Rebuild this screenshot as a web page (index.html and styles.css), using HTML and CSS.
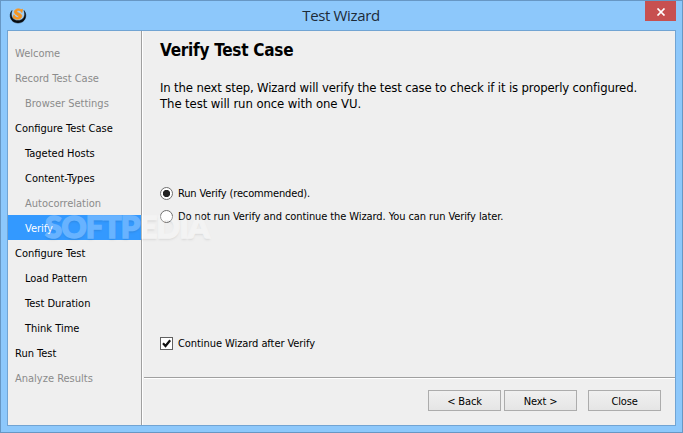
FILE: index.html
```html
<!DOCTYPE html>
<html lang="en">
<head>
<meta charset="utf-8">
<title>Test Wizard</title>
<link rel="stylesheet" href="styles.css">
</head>
<body>
<div class="window">
  <header class="titlebar">
    <svg class="app-icon" width="18" height="18" viewBox="0 0 18 18">
      <circle cx="9" cy="8" r="6.600" fill="#a3cdf0"/>
      <path d="M3 3.500C-.8 8 1.500 16 9 16S18.800 8 15 3.500C17 8.500 14.500 13.500 9 13.500S1 8.500 3 3.500Z" fill="#080c10" stroke="#080c10" stroke-width=".5"/>
      <path d="M13.500 2.300l-.7 3.200C12 3 7.800 2.700 7.800 4.400c0 1.800 5.300 1.800 4.900 4.900-.4 3.300-5.500 3.700-8.400 1.400l.6-2.900c1 3 4.700 3.400 4.900 1.900C10 8 5.100 7.900 5.400 4.800 5.600 1.900 10 1.100 12.200 2.800Z" fill="#f7941e" stroke="#f7941e" stroke-width=".9"/>
    </svg>
    <h1 class="caption">Test Wizard</h1>
    <button class="close" aria-label="Close"><svg width="10" height="8" viewBox="0 0 10 8"><path d="M1.500 .5l7 7M8.500 .5l-7 7" stroke="#fff" stroke-width="1.700"/></svg></button>
  </header>
  <div class="client">
    <nav class="steps">
      <div class="step off"><span>Welcome</span></div>
      <div class="step off"><span>Record Test Case</span></div>
      <div class="step sub off"><span>Browser Settings</span></div>
      <div class="step"><span>Configure Test Case</span></div>
      <div class="step sub"><span>Tageted Hosts</span></div>
      <div class="step sub"><span>Content-Types</span></div>
      <div class="step sub off"><span>Autocorrelation</span></div>
      <div class="step sub current"><span>Verify</span></div>
      <div class="step"><span>Configure Test</span></div>
      <div class="step sub"><span>Load Pattern</span></div>
      <div class="step sub"><span>Test Duration</span></div>
      <div class="step sub"><span>Think Time</span></div>
      <div class="step"><span>Run Test</span></div>
      <div class="step off"><span>Analyze Results</span></div>
    </nav>
    <main class="page">
      <section class="content">
        <h2 class="heading">Verify Test Case</h2>
        <p class="intro"><span class="line1">In the next step, Wizard will verify the test case to check if it is properly configured.</span><br><span class="line2">The test will run once with one VU.</span></p>
        <div class="options">
          <label class="option"><i class="radio on"></i><span class="opt1">Run Verify (recommended).</span></label>
          <label class="option"><i class="radio"></i><span class="opt2">Do not run Verify and continue the Wizard. You can run Verify later.</span></label>
        </div>
        <label class="option after"><i class="check"><svg width="11" height="11" viewBox="0 0 11 11"><path d="M2 5.300L4.500 8 9.200 2.200" fill="none" stroke="#111" stroke-width="2.200"/></svg></i><span class="opt3">Continue Wizard after Verify</span></label>
      </section>
      <footer class="actions">
        <button class="btn">&lt; Back</button>
        <button class="btn">Next &gt;</button>
        <button class="btn apart">Close</button>
      </footer>
    </main>
  </div>
  <div class="watermark">SOFTPEDIA</div>
</div>
</body>
</html>
```
FILE: styles.css
```css
* { box-sizing: border-box; }
body { margin: 0; }
.window {
  position: relative;
  width: 683px;
  height: 433px;
  border: 1px solid #6797c4;
  padding: 0 6px;
  background: #8dc8fb;
  font: 11px/14px "DejaVu Sans Condensed", "DejaVu Sans", sans-serif;
  font-stretch: condensed;
  color: #000;
  overflow: hidden;
}
.titlebar { display: flex; height: 29px; justify-content: space-between; }
.app-icon { margin: 6px 0 0 2px; }
.caption {
  margin: 4px 0 0 10px;
  font: 15px/20px "Open Sans", sans-serif;
  letter-spacing: -.35px;
  color: #1d2b38;
}
.close {
  display: flex;
  align-items: center;
  justify-content: center;
  width: 31px;
  height: 20px;
  padding: 1px 0 0 1px;
  border: 0;
  background: #c75050;
}
.client {
  display: flex;
  width: 669px;
  height: 396px;
  border: 1px solid #71a4d3;
  background: #efefef;
}
.steps {
  width: 134px;
  padding-top: 9px;
  border-right: 1px solid #a0a0a0;
}
.step { height: 25px; padding: 7px 0 0 7px; white-space: nowrap; }
.sub { padding-left: 17px; }
.off { color: #8b8b8b; }
.current { background: #3399ff; color: #fff; }
.page {
  display: flex;
  flex-direction: column;
  flex: 1;
  border-left: 1px solid #fff;
  padding-left: 1px;
}
.content { height: 346px; padding-left: 16px; }
.heading { margin: 0; padding-top: 8px; font-size: 17px; line-height: 22px; letter-spacing: -.25px; }
.intro { margin: 19px 0 0; font-size: 13px; line-height: 16px; white-space: nowrap; }
.line1 { letter-spacing: -.15px; }
.line2 { letter-spacing: -.09px; }
.options { display: flex; flex-direction: column; gap: 9px; margin-top: 74px; }
.option { display: flex; align-items: center; gap: 5px; height: 14px; white-space: nowrap; }
.option span { padding-top: 2px; }
.opt1 { letter-spacing: -.15px; }
.opt2 { letter-spacing: -.085px; }
.opt3 { letter-spacing: -.07px; }
.radio {
  width: 13px;
  height: 13px;
  border: 1px solid #707070;
  border-radius: 50%;
  background: #fff;
}
.on { background: radial-gradient(circle, #222 3.300px, #fff 4px); }
.after { margin-top: 113px; }
.check { display: flex; width: 13px; height: 13px; border: 1px solid #606060; background: #fff; }
.actions {
  display: flex;
  gap: 3px;
  height: 48px;
  padding: 12px 0 0 284px;
  border-top: 1px solid #a0a0a0;
  box-shadow: inset 0 1px #fff;
}
.btn {
  width: 73px;
  height: 21px;
  padding: 2px 0 0;
  border: 1px solid #acacac;
  background: linear-gradient(#f0f0f0, #e5e5e5);
  font: inherit;
  letter-spacing: -.15px;
  color: #000;
}
.apart { margin-left: 8px; }
.watermark {
  position: absolute;
  left: 44px;
  top: 207px;
  font: 900 31px/36px Lato, "Open Sans", sans-serif;
  letter-spacing: -.7px;
  color: #fff;
  -webkit-text-stroke: 1.5px #fff;
  opacity: .26;
  text-shadow: 0 2px 2px rgba(0, 0, 0, .35);
  pointer-events: none;
}
```
